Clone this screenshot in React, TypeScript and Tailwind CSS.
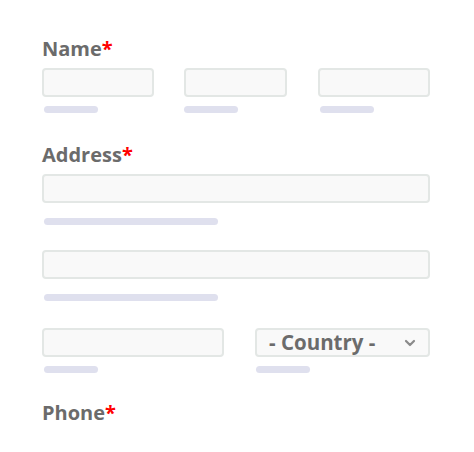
import React from 'react';

const Field = ({ w, bar, gap = 'mt-[9px]', barMl = 'ml-[2px]' }: { w: string; bar: string; gap?: string; barMl?: string }) => (
    <div className="flex flex-col">
        <div className={`${w} h-[29px] rounded-[4px] border-2 border-[#e3e7e5] bg-[#f9f9f9]`}></div>
        <div className={`${gap} ${barMl} ${bar} h-[7px] rounded-full bg-[#dfe0ee]`}></div>
    </div>
);

const Label = ({ text }: { text: string }) => (
    <h2 className="h-[24px] text-[20px] leading-[24px] font-bold text-[#6b6b6b]">
        {text}
        <span className="text-[#ff0000]">*</span>
    </h2>
);

const App = () => {
    return (
        <div className="w-[474px] h-[452px] bg-white font-['Open_Sans',sans-serif] overflow-hidden">
            <div className="pl-[42px] pt-[37px] w-[430px] box-content flex flex-col">
                <Label text="Name" />
                <div className="mt-[7px] flex">
                    <Field w="w-[112px]" bar="w-[54px]" />
                    <div className="ml-[30px]">
                        <Field w="w-[103px]" bar="w-[54px]" barMl="ml-0" />
                    </div>
                    <div className="ml-[31px]">
                        <Field w="w-[112px]" bar="w-[54px]" />
                    </div>
                </div>

                <div className="mt-[30px]">
                    <Label text="Address" />
                </div>
                <div className="mt-[7px]">
                    <Field w="w-[388px]" bar="w-[174px]" gap="mt-[15px]" />
                </div>
                <div className="mt-[25px]">
                    <Field w="w-[388px]" bar="w-[174px]" gap="mt-[15px]" />
                </div>
                <div className="mt-[27px] flex">
                    <Field w="w-[182px]" bar="w-[54px]" />
                    <div className="ml-[31px] flex flex-col">
                        <div className="w-[175px] h-[29px] rounded-[4px] border-2 border-[#e3e7e5] bg-[#f9f9f9] flex items-center justify-between pl-[12px] pr-[12px]">
                            <span className="text-[20.5px] leading-none font-bold text-[#6b6b6b]">- Country -</span>
                            <svg width="12" height="8" viewBox="0 0 12 8" fill="none">
                                <path d="M2 2l4 4 4-4" stroke="#8a8a8a" strokeWidth="2.2" strokeLinecap="round" strokeLinejoin="round" />
                            </svg>
                        </div>
                        <div className="mt-[9px] ml-[1px] w-[54px] h-[7px] rounded-full bg-[#dfe0ee]"></div>
                    </div>
                </div>

                <div className="mt-[28px]">
                    <Label text="Phone" />
                </div>
            </div>
        </div>
    );
};

export default App;
